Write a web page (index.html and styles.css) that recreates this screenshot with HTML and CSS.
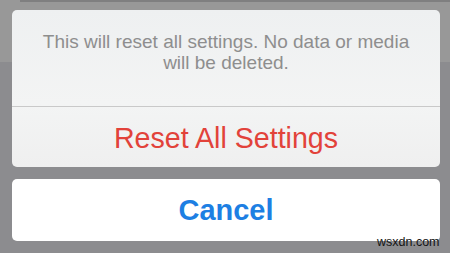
FILE: index.html
```html
<!DOCTYPE html>
<html>
<head>
<meta charset="utf-8">
<link rel="stylesheet" href="styles.css">
</head>
<body>
<div class="screen">
  <div class="sheet">
    <div class="group">
      <div class="message">This will reset all settings. No data or media will be deleted.</div>
      <div class="action destructive">Reset All Settings</div>
    </div>
    <div class="group cancel-group">
      <div class="action cancel">Cancel</div>
    </div>
  </div>
  <div class="watermark">wsxdn.com</div>
</div>
</body>
</html>
```
FILE: styles.css
```css
html, body {
  margin: 0;
  padding: 0;
}
body {
  font-family: "Liberation Sans", Arial, sans-serif;
}
.screen {
  position: relative;
  width: 450px;
  height: 253px;
  overflow: hidden;
  background:
    linear-gradient(#7f7f80, #7f7f80) 20px 0 / 430px 2px no-repeat,
    linear-gradient(to bottom, #989898 0, #989898 62px, #8c8c8f 62px, #8c8c8f 100%);
}
.sheet {
  display: flex;
  flex-direction: column;
  gap: 12px;
  padding: 10px 10px 0 12px;
}
.group {
  width: 428px;
  border-radius: 5px;
  background: linear-gradient(to bottom, #eef0f1 0%, #f3f4f4 60%, #efefef 100%);
  overflow: hidden;
}
.message {
  box-sizing: border-box;
  height: 97px;
  padding: 21px 20px 0;
  font-size: 19px;
  line-height: 21px;
  color: #8e8e8e;
  text-align: center;
  border-bottom: 1px solid #c9c9c9;
}
.action {
  text-align: center;
  white-space: nowrap;
}
.destructive {
  box-sizing: border-box;
  height: 60px;
  padding-top: 3px;
  line-height: 57px;
  font-size: 28.6px;
  color: #e2423a;
}
.cancel-group {
  background: #ffffff;
}
.cancel {
  height: 62px;
  line-height: 62px;
  font-size: 29px;
  font-weight: bold;
  color: #1d7fe3;
}
.watermark {
  position: absolute;
  left: 377px;
  top: 235px;
  font-size: 12.5px;
  line-height: 14px;
  color: #141414;
}
```
